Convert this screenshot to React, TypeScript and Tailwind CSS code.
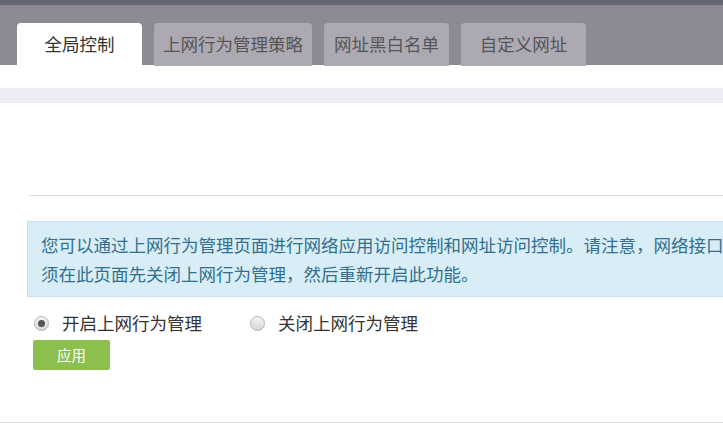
import React from "react";

const font = { fontFamily: '"Noto Sans CJK SC", "Microsoft YaHei", sans-serif' };

function Radio({ checked }: { checked: boolean }) {
  return (
    <span className="flex h-[15px] w-[15px] items-center justify-center rounded-full border border-[#b5b5b5] bg-gradient-to-b from-[#f4f4f4] to-[#d6d6d6]">
      {checked && <span className="h-[7px] w-[7px] rounded-full bg-[#555]" />}
    </span>
  );
}

export default function App() {
  const tabs = ["全局控制", "上网行为管理策略", "网址黑白名单", "自定义网址"];
  return (
    <div className="h-[423px] w-[723px] overflow-hidden bg-white" style={font}>
      <div className="h-[5px] bg-[#656674]" />
      <div className="flex h-[60px] items-end gap-[12px] bg-[#8d8a95] pl-[17px]">
        {tabs.map((t, i) => (
          <div
            key={t}
            className={
              i === 0
                ? "flex h-[42px] min-w-[125px] items-center justify-center rounded-t-[4px] bg-white px-[9px] text-[17.5px] text-[#333]"
                : "mb-[-1px] flex h-[43px] min-w-[125px] items-center justify-center rounded-t-[4px] bg-[#aca9b3] px-[9px] text-[17.5px] text-[#555]"
            }
          >
            <span className="mt-[-1px] leading-none">{t}</span>
          </div>
        ))}
      </div>
      <div className="h-[23px]" />
      <div className="h-[15px] bg-[#eeedf6]" />
      <div className="h-[92px]" />
      <div className="ml-[29px] h-px bg-[#dcdcdc]" />
      <div className="h-[25px]" />
      <div className="ml-[27px] w-[720px] border border-[#c3e2ee] bg-[#d9edf6] py-[8px] pl-[13px] text-[17.5px] leading-[29px] text-[#31708f] whitespace-nowrap">
        <div>您可以通过上网行为管理页面进行网络应用访问控制和网址访问控制。请注意，网络接口</div>
        <div>须在此页面先关闭上网行为管理，然后重新开启此功能。</div>
      </div>
      <div className="ml-[34px] mt-[12px] flex h-[28px] items-center text-[17.5px] text-[#333]">
        <Radio checked />
        <span className="ml-[13px] leading-none">开启上网行为管理</span>
        <span className="ml-[48px]">
          <Radio checked={false} />
        </span>
        <span className="ml-[13px] leading-none">关闭上网行为管理</span>
      </div>
      <div className="ml-[33px] mt-[3px] flex h-[30px] w-[77px] items-center justify-center rounded-[2px] bg-[#8bc04f] text-[14.5px] text-white">
        应用
      </div>
      <div className="h-[52px]" />
      <div className="h-px bg-[#dcdcdc]" />
    </div>
  );
}
